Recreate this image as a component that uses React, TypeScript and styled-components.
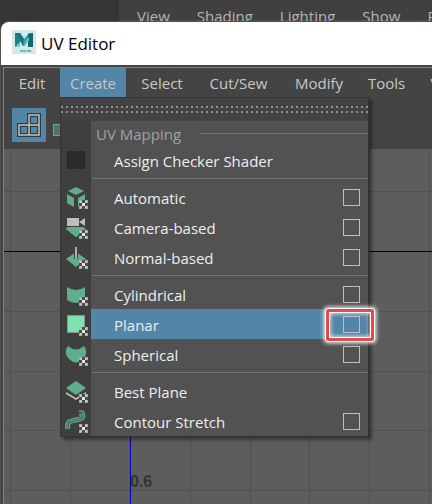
import React from "react";
import styled, { createGlobalStyle } from "styled-components";

const GlobalStyle = createGlobalStyle`
  *, *::before, *::after { box-sizing: border-box; }
  html, body { margin: 0; background: #353535; overflow: hidden; }
  body, button, input { font-family: "Open Sans", "Noto Sans", sans-serif; font-size: 15px; }
`;

const Desktop = styled.div`
  display: flex;
  flex-direction: column;
  height: 100vh;
  overflow: hidden;
  background: linear-gradient(#353535 0 394px, #426a87 394px 426px, #444 426px);
`;

const BackPanel = styled.div`
  flex: none;
  display: flex;
  gap: 27px;
  height: 22px;
  margin-left: 119px;
  padding: 5px 0 0 18px;
  overflow: hidden;
  white-space: nowrap;
  background: #404040;
  color: #b4b4b4;
  line-height: 22px;
  box-shadow: inset 0 -2px #4f4f4f;
`;

const Window = styled.main`
  flex: 1;
  display: flex;
  flex-direction: column;
  min-height: 0;
  margin-left: 1px;
  border-top-left-radius: 8px;
  background: #444;
  box-shadow: 0 0 0 1px #505050;
`;

const TitleBar = styled.header`
  flex: none;
  display: flex;
  align-items: center;
  gap: 5px;
  height: 43px;
  padding-left: 11px;
  padding-bottom: 3px;
  border-top-left-radius: 8px;
  background: #fff;
  color: #000;
`;

const Title = styled.h1`
  margin: 0;
  padding-top: 3px;
  font-family: "Open Sans", "Noto Sans", sans-serif;
  font-size: 17px;
  font-weight: 400;
  line-height: 24px;
`;

const Frame = styled.div`
  flex: 1;
  display: flex;
  flex-direction: column;
  min-height: 0;
  margin: 2px 0 0 2px;
  border-top: 1px solid #808080;
  border-left: 1px solid #808080;
`;

const MenuBar = styled.nav`
  position: relative;
  z-index: 1;
  flex: none;
  display: flex;
  height: 29px;
`;

const MenuSlot = styled.div<{ $width: number }>`
  position: relative;
  flex: none;
  width: ${(p) => p.$width}px;
`;

const MenuTitle = styled.button<{ $open?: boolean }>`
  width: 100%;
  height: 29px;
  padding: 2px 0 0;
  border: 0;
  text-align: center;
  white-space: nowrap;
  line-height: 27px;
  background: ${(p) => (p.$open ? "#5285a6" : "transparent")};
  color: #c8c8c8;
`;

const Toolbar = styled.div`
  flex: none;
  display: flex;
  align-items: center;
  gap: 7px;
  height: 52px;
  padding: 4px 0 0 8px;
`;

const ToolButton = styled.button<{ $active?: boolean }>`
  display: flex;
  flex: none;
  padding: 0;
  border: 0;
  border-radius: 1px;
  background: ${(p) => (p.$active ? "#5285a6" : "transparent")};
`;

const Canvas = styled.div`
  flex: 1;
  min-height: 0;
  background: #5d5d5d;
  svg { display: block; }
`;

const Dropdown = styled.div`
  position: absolute;
  top: 29px;
  left: 0;
  width: 309px;
  border: 1px solid #333;
  background: linear-gradient(90deg, #3f3f3f 30px, #525252 30px);
  box-shadow: 3px 3px 3px #0006;
`;

const TearOff = styled.div`
  height: 23px;
  padding-top: 8px;
  background: #424242;
  svg { display: block; }
`;

const Section = styled.div`
  display: flex;
  align-items: center;
  gap: 18px;
  height: 24px;
  padding-left: 35px;
  color: #a0a0a0;
  line-height: 22px;
  &::after { content: ""; flex: 1; height: 1px; background: #737373; }
`;

const SectionLabel = styled.span`
  padding-top: 2px;
`;

const Separator = styled.hr`
  height: 1px;
  margin: 3px 0 3px 31px;
  border: 0;
  background: #737373;
`;

const Row = styled.div<{ $active?: boolean }>`
  position: relative;
  display: flex;
  align-items: center;
  height: 30px;
  padding-right: 8px;
  background: ${(p) => (p.$active ? "linear-gradient(90deg, transparent 30px, #5285a6 30px)" : "none")};
`;

const RowButton = styled.button`
  flex: 1;
  display: flex;
  align-items: center;
  gap: 25px;
  height: 30px;
  padding: 2px 0 0 4px;
  border: 0;
  background: none;
  color: #eee;
  text-align: left;
  white-space: nowrap;
  svg { flex: none; }
`;

const OptionBox = styled.input`
  appearance: none;
  flex: none;
  width: 17px;
  height: 17px;
  margin: 0;
  border: 1px solid #bebebe;
`;

const Callout = styled.span`
  position: absolute;
  top: 0;
  right: -6px;
  width: 48px;
  height: 32px;
  border: 3px solid #ea4747;
  border-radius: 2px;
  outline: 1px solid #fff;
  box-shadow: 0 0 4px 2px #fff, inset 0 0 0 1px #fff, inset 0 0 5px 1px #fff;
  pointer-events: none;
`;

const MayaLogo = () => (
  <svg width="24" height="24" viewBox="0 0 24 24" aria-hidden="true">
    <rect width="24" height="24" fill="#d3e8e8" />
    <path d="M3 3h5v14H3z" fill="#1d8286" />
    <path d="M3 17l5-5v5z" fill="#7cc8c6" />
    <path d="M4 3h4l4 6 5-6h3l-7 13h-2z" fill="#2aa5a5" />
    <path d="M4 3h4l4 6-1 7z" fill="#17767a" />
    <path d="M16 4l5-1v14h-5z" fill="#14686c" />
    <path d="M12 15l5-8v3l-4 6z" fill="#7cc8c6" />
    <path d="M9 22v-2l1 1 1-1v2m1 0 1-2 1 2m1-2 1 1 1-1m-1 1v1m1 0 1-2 1 2" fill="none" stroke="#4da5a7" />
  </svg>
);

const Badge = () => (
  <g>
    <path d="M14 14h9v9h-9z" fill="#4c4c4c" />
    <path d="M14 14h3v3h-3zM20 14h3v3h-3zM14 20h3v3h-3zM20 20h3v3h-3z" fill="#a9a9a9" />
    <path d="M15 15h2v2h-2zM20 15h2v2h-2zM15 20h2v2h-2zM20 20h2v2h-2z" fill="#c6c6c6" />
    <path d="M17 17h3v3h-3z" fill="#e6e6e6" />
  </g>
);

type IconName = "checker" | "cube" | "camera" | "normal" | "cylinder" | "plane" | "sphere" | "best" | "contour";

const shapes: Record<IconName, React.ReactNode> = {
  checker: <path d="M2 2h18v18H2z" fill="#2b2b2b" />,
  cube: <path d="M11 1l8 4-8 4-8-4zM2 8l7 4v9l-7-4zM20 8l-7 4v9l7-4z" fill="#5fae8b" />,
  camera: (
    <g>
      <path d="M11 7l10 6-10 8-10-8z" fill="#5fae8b" />
      <path d="M1 1h20v10H1z" fill="#3f3f3f" />
      <path d="M1 12l3-1h14l3 2-10 8-10-8z" fill="#5fae8b" />
      <path d="M2 2h12v8H2zM14 6l6-4v8z" fill="#bdbdbd" />
    </g>
  ),
  normal: (
    <g>
      <path d="M11 6l10 7-10 8-10-8z" fill="#5fae8b" />
      <path d="M9 1h4v12H9z" fill="#3f3f3f" />
      <path d="M10 1h2v12h-2z" fill="#adadad" />
    </g>
  ),
  cylinder: <path d="M2 4q9 6 18 0v13q-9 6-18 0z" fill="#5fae8b" />,
  plane: <path d="M2.500 2.500h17v17h-17z" fill="#7de3b1" stroke="#8f8f8f" />,
  sphere: <path d="M3 3q8 7 16 0 5 7-1 13-7 7-14 0-6-6-1-13z" fill="#5fae8b" />,
  best: (
    <g>
      <path d="M1 12l10 6 10-6v2l-10 6-10-6z" fill="#bdbdbd" />
      <path d="M11 1l10 7-10 7L1 8z" fill="#5fae8b" />
    </g>
  ),
  contour: (
    <g fill="none">
      <path d="M3 19C1 10 7 11 11 10S20 9 17 3L14 3" stroke="#5fae8b" strokeWidth="5" />
      <path d="M3 19C1 10 7 11 11 10S20 9 17 3L14 3" stroke="#3f5a4e" strokeWidth="2.500" />
      <path d="M3 19C1 10 7 11 11 10S20 9 17 3" stroke="#5fae8b" strokeWidth="1" />
    </g>
  ),
};

const MenuIcon = ({ name }: { name: IconName }) => (
  <svg width="24" height="24" viewBox="0 0 24 24" aria-hidden="true">
    {shapes[name]}
    {name !== "checker" && <Badge />}
  </svg>
);

const TearDots = () => (
  <svg width="100%" height="8" aria-hidden="true">
    <defs>
      <pattern id="tear" width="5" height="5" patternUnits="userSpaceOnUse">
        <path d="M0 0h2v2H0z" fill="#919191" />
      </pattern>
    </defs>
    <rect width="100%" height="8" fill="url(#tear)" />
  </svg>
);

const Grid = () => (
  <svg width="100%" height="100%" shapeRendering="crispEdges" role="img" aria-label="UV grid">
    <g fill="#515151">
      {[6, 66, 126, 186, 246, 305, 365, 425].map((x) => (
        <rect key={x} x={x} y="0" width="1" height="100%" />
      ))}
      {[42, 162, 222, 281, 341].map((y) => (
        <rect key={y} x="0" y={y} width="100%" height="1" />
      ))}
    </g>
    <rect y="102" width="100%" height="1" fill="#000" />
    <rect x="126" y="103" width="1" height="100%" fill="#0000b8" />
    <text x="126" y="338" fill="#333" fontFamily="Liberation Sans, sans-serif" fontSize="16" fontWeight="700">
      0.6
    </text>
  </svg>
);

const ShellsIcon = () => (
  <svg width="34" height="34" viewBox="0 0 34 34" aria-hidden="true">
    <g fill="none">
      <path d="M7 17h10V7h10v20H7zM17 17h10M17 17v10" stroke="#303a40" strokeWidth="4" />
      <path d="M7 17h10V7h10v20H7zM17 17h10M17 17v10" stroke="#c4c4bc" strokeWidth="1.500" />
    </g>
  </svg>
);

const ShadeIcon = () => (
  <svg width="24" height="34" viewBox="0 0 24 34" aria-hidden="true">
    <rect x="0.500" y="16.500" width="12" height="11" fill="#4f7664" stroke="#5fae8b" />
  </svg>
);

type Item = { label: string; icon: IconName; option?: boolean; active?: boolean };

const groups: Item[][] = [
  [{ label: "Assign Checker Shader", icon: "checker" }],
  [
    { label: "Automatic", icon: "cube", option: true },
    { label: "Camera-based", icon: "camera", option: true },
    { label: "Normal-based", icon: "normal", option: true },
  ],
  [
    { label: "Cylindrical", icon: "cylinder", option: true },
    { label: "Planar", icon: "plane", option: true, active: true },
    { label: "Spherical", icon: "sphere", option: true },
  ],
  [
    { label: "Best Plane", icon: "best" },
    { label: "Contour Stretch", icon: "contour", option: true },
  ],
];

const menus = [
  { label: "Edit", width: 56 },
  { label: "Create", width: 66 },
  { label: "Select", width: 72 },
  { label: "Cut/Sew", width: 81 },
  { label: "Modify", width: 80 },
  { label: "Tools", width: 55 },
  { label: "View", width: 66 },
];

const CreateMenu = () => (
  <Dropdown>
    <TearOff>
      <TearDots />
    </TearOff>
    <Section>
      <SectionLabel>UV Mapping</SectionLabel>
    </Section>
    {groups.map((items, index) => (
      <React.Fragment key={index}>
        {index > 0 && <Separator />}
        {items.map((item) => (
          <Row key={item.label} $active={item.active}>
            <RowButton>
              <MenuIcon name={item.icon} />
              {item.label}
            </RowButton>
            {item.option && <OptionBox type="checkbox" aria-label={`${item.label} options`} />}
            {item.active && <Callout />}
          </Row>
        ))}
      </React.Fragment>
    ))}
  </Dropdown>
);

export default function App() {
  return (
    <Desktop>
      <GlobalStyle />
      <BackPanel>
        {["View", "Shading", "Lighting", "Show", "Renderer"].map((label) => (
          <span key={label}>{label}</span>
        ))}
      </BackPanel>
      <Window>
        <TitleBar>
          <MayaLogo />
          <Title>UV Editor</Title>
        </TitleBar>
        <Frame>
          <MenuBar>
            {menus.map(({ label, width }) => (
              <MenuSlot key={label} $width={width}>
                <MenuTitle $open={label === "Create"}>{label}</MenuTitle>
                {label === "Create" && <CreateMenu />}
              </MenuSlot>
            ))}
          </MenuBar>
          <Toolbar>
            <ToolButton $active aria-label="UV shells">
              <ShellsIcon />
            </ToolButton>
            <ToolButton aria-label="Shaded">
              <ShadeIcon />
            </ToolButton>
          </Toolbar>
          <Canvas>
            <Grid />
          </Canvas>
        </Frame>
      </Window>
    </Desktop>
  );
}
